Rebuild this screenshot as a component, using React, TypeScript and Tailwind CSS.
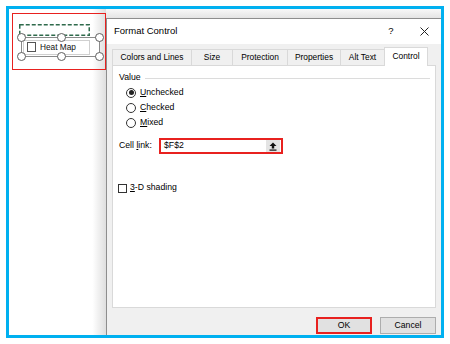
import { ReactNode } from "react";

const tabs = [
  { label: "Colors and Lines", w: "w-[79px]" },
  { label: "Size", w: "w-[41px]" },
  { label: "Protection", w: "w-[55px]" },
  { label: "Properties", w: "w-[53px]" },
  { label: "Alt Text", w: "w-[44px]" },
];

// selection handles around the form control on the sheet
const handles = [
  "left-[4px] top-[19px]",
  "left-[44px] top-[19px]",
  "left-[82px] top-[19px]",
  "left-[4px] top-[38px]",
  "left-[44px] top-[38px]",
  "left-[82px] top-[38px]",
];

const Radio = ({ checked, children }: { checked?: boolean; children: ReactNode }) => (
  <div className="h-[15px] flex items-center pl-[13px]">
    <span className="w-[10px] h-[10px] rounded-full border border-[#333] bg-white flex items-center justify-center">
      {checked && <span className="w-[5px] h-[5px] rounded-full bg-[#222]" />}
    </span>
    <span className="ml-[4px]">{children}</span>
  </div>
);

const SheetControl = () => (
  <div className="relative w-[94px] h-[57px] border border-[#e8211f]">
    <svg className="absolute left-[6px] top-[10px]" width="71" height="12" viewBox="0 0 71 12">
      <rect x="0.75" y="0.75" width="69.5" height="10.5" fill="none" stroke="#2f6b4c" strokeWidth="1.5" strokeDasharray="4 2" />
    </svg>
    <div className="absolute left-[8px] top-[23px] w-[79px] h-[20px] border-[1.5px] border-[#8a8a8a] bg-white flex items-center">
      <div className="ml-[1px] h-[15px] w-[67px] border border-[#d0d0d0] flex items-center pl-[3px]">
        <span className="w-[9px] h-[10px] border border-[#555] bg-white" />
        <span className="ml-[4px] text-[8.3px] text-[#111]">Heat Map</span>
      </div>
    </div>
    {handles.map((h) => (
      <span
        key={h}
        className={`absolute ${h} w-[9px] h-[9px] -ml-[0.5px] -mt-[0.5px] rounded-full border border-[#5f5f5f] bg-white`}
      />
    ))}
  </div>
);

export default function App() {
  return (
    <div className="w-[450px] h-[344px] bg-white p-[6px] font-['Liberation_Sans',Arial,sans-serif] text-[8.7px] text-black">
      <div className="h-full border-[3px] border-[#00b0f0] flex overflow-hidden">
        {/* worksheet */}
        <div className="w-[97px] shrink-0 h-full bg-linear-to-r from-white from-[86%] to-[#dedede] pt-[4px] pl-[3px]">
          <SheetControl />
        </div>

        {/* dialog */}
        <div className="flex-1 flex flex-col min-w-0">
          <div className="h-[9px] bg-linear-to-b from-[#f8f8f8] to-[#e4e4e4]" />
          <div className="flex-1 flex flex-col border-l border-t border-[#8d8d8d] bg-[#f0f0f0]">
            <div className="h-[25px] bg-white flex items-center pl-[7px]">
              <span className="text-[9.5px]">Format Control</span>
              <div className="flex-1" />
              <span className="w-[34px] text-center text-[9.5px]">?</span>
              <span className="w-[33px] flex justify-center">
                <svg width="9" height="9" viewBox="0 0 9 9">
                  <path d="M0.5 0.5L8.5 8.5M8.5 0.5L0.5 8.5" stroke="#222" strokeWidth="1" />
                </svg>
              </span>
            </div>

            <div className="flex-1 flex flex-col pl-[5px] pr-[5px] pt-[3px]">
              <div className="h-[18px] flex items-end text-[8.4px]">
                {tabs.map((t) => (
                  <div
                    key={t.label}
                    className={`${t.w} h-[16px] border-t border-l border-[#d9d9d9] bg-[#f0f0f0] flex items-center justify-center`}
                  >
                    {t.label}
                  </div>
                ))}
                <div className="relative z-10 w-[44px] h-[19px] -mb-px border-t border-l border-r border-[#d9d9d9] bg-white flex items-center justify-center pb-[2px]">
                  Control
                </div>
              </div>

              <div className="h-[243px] bg-white border border-[#d9d9d9] flex flex-col pt-[6px]">
                <div className="h-[12px] flex items-center pl-[6px] pr-[5px]">
                  <span>Value</span>
                  <span className="flex-1 h-px bg-[#dcdcdc] ml-[4px]" />
                </div>
                <div className="mt-[1px]">
                  <Radio checked>
                    <span className="underline">U</span>nchecked
                  </Radio>
                  <Radio>
                    <span className="underline">C</span>hecked
                  </Radio>
                  <Radio>
                    <span className="underline">M</span>ixed
                  </Radio>
                </div>

                <div className="mt-[8px] h-[16px] flex items-center pl-[6px]">
                  <span className="w-[40px]">
                    Cell <span className="underline">l</span>ink:
                  </span>
                  <div className="w-[124px] h-[16px] border-2 border-[#e8211f] bg-white flex items-center pl-[3px] pr-[1px]">
                    <span className="flex-1">$F$2</span>
                    <span className="w-[14px] h-[12px] bg-[#e4e4e4] flex items-center justify-center">
                      <svg width="8" height="9" viewBox="0 0 8 9">
                        <path d="M4 0.5L7.5 4H5.2V6.5H2.8V4H0.5Z" fill="#111" />
                        <rect x="0.5" y="7.5" width="7" height="1.2" fill="#111" />
                      </svg>
                    </span>
                  </div>
                </div>

                <div className="mt-[28px] h-[12px] flex items-center pl-[5px]">
                  <span className="w-[9px] h-[9px] border border-[#333] bg-white" />
                  <span className="ml-[3px]">
                    <span className="underline">3</span>-D shading
                  </span>
                </div>
              </div>

              <div className="mt-[9px] flex justify-end gap-[8px]">
                <button className="w-[56px] h-[17px] border-2 border-[#e8211f] bg-[#e1e1e1] flex items-center justify-center">
                  OK
                </button>
                <button className="w-[56px] h-[17px] border border-[#adadad] bg-[#e1e1e1] flex items-center justify-center">
                  Cancel
                </button>
              </div>
            </div>
          </div>
        </div>
      </div>
    </div>
  );
}
